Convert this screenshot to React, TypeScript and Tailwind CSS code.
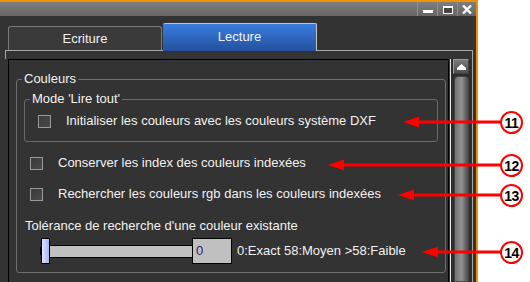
import React from "react";

const arrows = [
  { n: "11", y: 122, tip: 403 },
  { n: "12", y: 165, tip: 328 },
  { n: "13", y: 195, tip: 398 },
  { n: "14", y: 252, tip: 422 },
];

function Check() {
  return <div className="w-[13px] h-[13px] shrink-0 border border-[#9a9a9a] bg-gradient-to-br from-[#3a3a3a] to-[#4a4a4a]" />;
}

export default function App() {
  return (
    <div className="relative w-[530px] h-[282px] bg-white overflow-hidden font-['Liberation_Sans',Arial,sans-serif] text-[13px] text-[#f2f2f2]">
      <div className="w-[478px] h-[282px] flex flex-col border-t-2 border-r-2 border-[#f39200] bg-[#333333]">
        {/* title bar */}
        <div className="h-[14px] flex justify-end bg-gradient-to-b from-[#7d7d7d] via-[#727272] to-[#666666]">
          <div className="w-[20px] flex items-center justify-center border-l border-[#8e8e8e]">
            <div className="w-[10px] h-[3px] mt-[4px] bg-white" />
          </div>
          <div className="w-[20px] flex items-center justify-center border-l border-[#8e8e8e]">
            <div className="w-[10px] h-[8px] mt-[1px] border border-t-[2px] border-white bg-[#444]" />
          </div>
          <div className="w-[19px] flex items-center justify-center border-l border-[#8e8e8e]">
            <svg width="10" height="9" viewBox="0 0 10 9" className="mt-[1px]">
              <path d="M1 0.5 L9 8.5 M9 0.5 L1 8.5" stroke="white" strokeWidth="2.4" />
            </svg>
          </div>
        </div>
        {/* tabs */}
        <div className="h-[34px] flex items-end pl-[8px]">
          <div className="w-[154px] h-[24px] flex items-center justify-center border border-b-0 border-[#7a7a7a] rounded-t-[3px] bg-[#3a3a3a]">
            Ecriture
          </div>
          <div className="relative z-10 -mb-px ml-[1px] w-[154px] h-[28px] flex items-center justify-center pb-[1px] border-t border-r border-[#c4c4c4] rounded-t-[2px] bg-gradient-to-b from-[#3b7de0] to-[#23519f]">
            Lecture
          </div>
        </div>
        {/* panel */}
        <div className="ml-[5px] w-[468px] flex-1 flex flex-col border-t border-r border-[#a8a8a8]">
          <div className="w-px h-[8px] bg-[#a8a8a8]" />
          <div className="flex flex-1 pl-[3px]">
            <div className="w-[441px] border-l border-t border-r border-black flex flex-col">
              <fieldset className="ml-[7px] mt-[12px] w-[430px] border border-[#6e6e6e] rounded-[3px] pl-[7px] pb-[8px]">
                <legend className="px-[2px] -ml-[2px] leading-[14px]">Couleurs</legend>
                <fieldset className="mt-[6px] w-[414px] border border-[#6a6a6a] rounded-[3px] pl-[7px] pb-[12px]">
                  <legend className="px-[2px] -ml-[2px] leading-[14px]">Mode 'Lire tout'</legend>
                  <div className="mt-[7px] h-[16px] flex items-center ml-[6px]">
                    <Check />
                    <span className="ml-[15px]">Initialiser les couleurs avec les couleurs système DXF</span>
                  </div>
                </fieldset>
                <div className="mt-[13px] h-[16px] flex items-center ml-[6px]">
                  <Check />
                  <span className="ml-[15px]">Conserver les index des couleurs indexées</span>
                </div>
                <div className="mt-[15px] h-[16px] flex items-center ml-[6px]">
                  <Check />
                  <span className="ml-[15px]">Rechercher les couleurs rgb dans les couleurs indexées</span>
                </div>
                <div className="mt-[16px] h-[16px] flex items-center ml-[1px]">
                  Tolérance de recherche d'une couleur existante
                </div>
                <div className="mt-[4px] h-[26px] flex items-center ml-[16px]">
                  <div className="w-px h-[8px] bg-black" />
                  <div className="relative z-10 w-[9px] h-[26px] border border-black bg-gradient-to-r from-[#dfe3ff] via-[#c3cbfa] to-[#aab4f0]" />
                  <div className="-ml-px w-[144px] h-[13px] border border-black bg-[#c0c0c0]" />
                  <div className="-ml-px w-[40px] h-[26px] border border-black bg-[#c0c0c0] flex items-center pl-[3px] text-[#33226a]">
                    0
                  </div>
                  <span className="ml-[5px]">0:Exact 58:Moyen &gt;58:Faible</span>
                </div>
              </fieldset>
            </div>
            <div className="w-px" />
            <div className="w-px bg-[#e8e8e8]" />
            {/* scrollbar */}
            <div className="w-[20px] flex flex-col bg-[#2c2c2c]">
              <div className="ml-[2px] w-[16px] h-[15px] flex items-center justify-center border border-t-[#9a9a9a] border-l-[#9a9a9a] border-r-[#444] border-b-[#444] bg-gradient-to-b from-[#7a7a7a] to-[#4e4e4e]">
                <svg width="9" height="6" viewBox="0 0 9 6">
                  <path d="M4.5 0 L9 4 L0 4 Z" fill="white" />
                  <rect x="0" y="4" width="9" height="2" fill="white" />
                </svg>
              </div>
              <div className="ml-[3px] mt-[2px] w-[15px] flex-1 rounded-t-[4px] border border-[#474747] bg-gradient-to-r from-[#707070] via-[#929292] to-[#4c4c4c]" />
            </div>
            <div className="w-px" />
          </div>
        </div>
      </div>

      {/* annotations */}
      <svg className="absolute left-0 top-0 pointer-events-none" width="530" height="282">
        {arrows.map((a) => (
          <g key={a.n}>
            <line x1={a.tip + 14} y1={a.y} x2={502} y2={a.y} stroke="#ff0000" strokeWidth="3" />
            <polygon points={`${a.tip},${a.y} ${a.tip + 16},${a.y - 5.5} ${a.tip + 16},${a.y + 5.5}`} fill="#ff0000" />
          </g>
        ))}
      </svg>
      {arrows.map((a) => (
        <div
          key={a.n}
          className="absolute left-[500px] w-[23px] h-[23px] rounded-full border-2 border-[#ff0000] bg-white flex items-center justify-center text-black font-bold text-[14px] tracking-[-0.5px] leading-none"
          style={{ top: a.y - 11 }}
        >
          {a.n}
        </div>
      ))}
    </div>
  );
}
